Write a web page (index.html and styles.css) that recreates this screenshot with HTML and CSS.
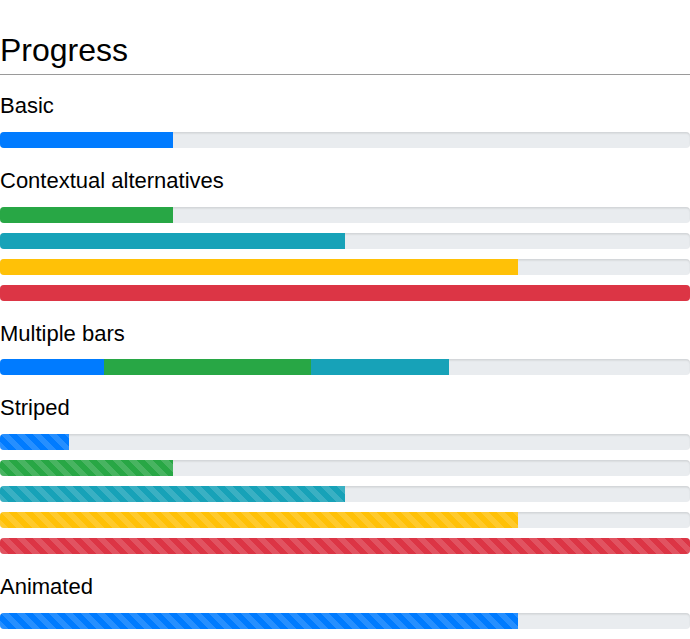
FILE: index.html
```html
<!DOCTYPE html>
<html lang="en">
<head>
<meta charset="utf-8">
<title>Progress</title>
<link rel="stylesheet" href="styles.css">
</head>
<body>
<main class="page">
  <h1 class="title">Progress</h1>
  <hr class="rule">

  <section class="group">
    <h2 class="label">Basic</h2>
    <div class="progress"><div class="bar bar-primary" style="width:25%"></div></div>
  </section>

  <section class="group">
    <h2 class="label">Contextual alternatives</h2>
    <div class="progress"><div class="bar bar-success" style="width:25%"></div></div>
    <div class="progress"><div class="bar bar-info" style="width:50%"></div></div>
    <div class="progress"><div class="bar bar-warning" style="width:75%"></div></div>
    <div class="progress"><div class="bar bar-danger" style="width:100%"></div></div>
  </section>

  <section class="group">
    <h2 class="label">Multiple bars</h2>
    <div class="progress">
      <div class="bar bar-primary" style="width:15%"></div>
      <div class="bar bar-success" style="width:30%"></div>
      <div class="bar bar-info" style="width:20%"></div>
    </div>
  </section>

  <section class="group">
    <h2 class="label">Striped</h2>
    <div class="progress"><div class="bar bar-primary striped" style="width:10%"></div></div>
    <div class="progress"><div class="bar bar-success striped" style="width:25%"></div></div>
    <div class="progress"><div class="bar bar-info striped" style="width:50%"></div></div>
    <div class="progress"><div class="bar bar-warning striped" style="width:75%"></div></div>
    <div class="progress"><div class="bar bar-danger striped" style="width:100%"></div></div>
  </section>

  <section class="group">
    <h2 class="label">Animated</h2>
    <div class="progress"><div class="bar bar-primary striped" style="width:75%"></div></div>
  </section>
</main>
</body>
</html>
```

FILE: styles.css
```css
* { box-sizing: border-box; }

html, body {
  margin: 0;
  padding: 0;
  background: #fff;
}

body {
  font-family: "Liberation Sans", Arial, sans-serif;
  color: #000;
}

.page {
  display: flex;
  flex-direction: column;
  padding-top: 31px;
}

.title {
  margin: 0;
  font-size: 32px;
  line-height: 38px;
  font-weight: 400;
}

.rule {
  margin: 5px 0 8px;
  border: 0;
  border-top: 1px solid #9a9a9a;
  height: 0;
  width: 100%;
}

.group {
  display: flex;
  flex-direction: column;
}

.label {
  margin: 10px 0 12.35px;
  font-size: 22px;
  line-height: 26.4px;
  font-weight: 400;
}

.progress {
  display: flex;
  height: 16px;
  margin-bottom: 10px;
  overflow: hidden;
  background-color: #e9ecef;
  border-radius: 4px;
  box-shadow: inset 0 1.6px 1.6px rgba(0, 0, 0, 0.1);
}

.bar {
  height: 100%;
}

.bar-primary { background-color: #007bff; }
.bar-success { background-color: #28a745; }
.bar-info { background-color: #17a2b8; }
.bar-warning { background-color: #ffc107; }
.bar-danger { background-color: #dc3545; }

.striped {
  background-image: linear-gradient(45deg,
    rgba(255, 255, 255, 0.15) 25%, transparent 25%,
    transparent 50%, rgba(255, 255, 255, 0.15) 50%,
    rgba(255, 255, 255, 0.15) 75%, transparent 75%, transparent);
  background-size: 16px 16px;
}
```
